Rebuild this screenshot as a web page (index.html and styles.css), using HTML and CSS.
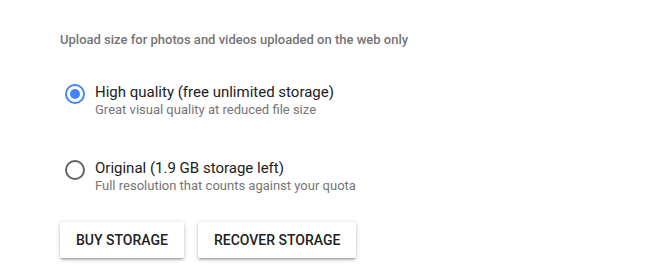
FILE: index.html
```html
<!DOCTYPE html>
<html>
<head>
<meta charset="utf-8">
<link rel="stylesheet" href="styles.css">
</head>
<body>
<div class="panel">
  <div class="heading">Upload size for photos and videos uploaded on the web only</div>
  <div class="options">
    <label class="option">
      <span class="radio checked"><span class="dot"></span></span>
      <span class="texts">
        <span class="title">High quality (free unlimited storage)</span>
        <span class="sub">Great visual quality at reduced file size</span>
      </span>
    </label>
    <label class="option">
      <span class="radio"></span>
      <span class="texts">
        <span class="title">Original (1.9 GB storage left)</span>
        <span class="sub">Full resolution that counts against your quota</span>
      </span>
    </label>
  </div>
  <div class="actions">
    <button class="btn">BUY STORAGE</button>
    <button class="btn">RECOVER STORAGE</button>
  </div>
</div>
</body>
</html>
```
FILE: styles.css
```css
html, body {
  margin: 0;
  padding: 0;
  background: #ffffff;
}
body {
  font-family: Roboto, "Liberation Sans", sans-serif;
  width: 648px;
  height: 278px;
  overflow: hidden;
}
.panel {
  padding: 30px 0 0 60px;
}
.heading {
  font-size: 13px;
  font-weight: 500;
  line-height: 20px;
  color: #757575;
}
.options {
  display: flex;
  flex-direction: column;
  gap: 38px;
  margin-top: 32px;
}
.option {
  display: flex;
  align-items: flex-start;
  gap: 10px;
}
.radio {
  box-sizing: border-box;
  width: 20px;
  height: 20px;
  margin: 2px 0 0 5px;
  border: 2px solid #5f6368;
  border-radius: 50%;
  display: flex;
  align-items: center;
  justify-content: center;
  flex: none;
}
.radio.checked {
  border-color: #4285f4;
}
.dot {
  width: 10px;
  height: 10px;
  border-radius: 50%;
  background: #4285f4;
}
.texts {
  display: flex;
  flex-direction: column;
}
.title {
  font-size: 15px;
  line-height: 20px;
  color: #212121;
}
.sub {
  font-size: 13px;
  line-height: 20px;
  color: #757575;
  margin-top: -2px;
}
.actions {
  display: flex;
  gap: 14px;
  margin-top: 26px;
}
.btn {
  font-family: Roboto, "Liberation Sans", sans-serif;
  font-size: 14px;
  font-weight: 500;
  color: #212121;
  background: #ffffff;
  border: none;
  border-radius: 2px;
  height: 36px;
  padding: 0 16px;
  box-shadow: 0 2px 2px 0 rgba(0,0,0,0.14), 0 3px 1px -2px rgba(0,0,0,0.12), 0 1px 5px 0 rgba(0,0,0,0.2);
}
```
